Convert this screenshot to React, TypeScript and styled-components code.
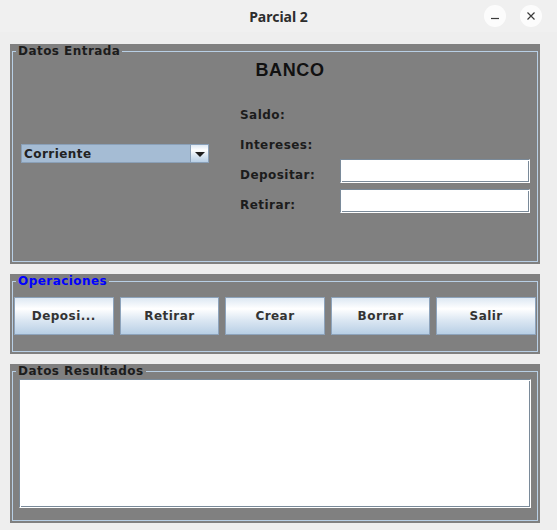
import React from 'react';
import styled, { createGlobalStyle } from 'styled-components';

const Global = createGlobalStyle`
  html, body { margin: 0; padding: 0; background: #eeeeee; }
  body { font-family: "DejaVu Sans", "Liberation Sans", sans-serif; }
  * { box-sizing: border-box; }
`;

const Window = styled.div`
  width: 557px;
  height: 530px;
  background: #eeeeee;
  display: flex;
  flex-direction: column;
  overflow: hidden;
`;

const TitleBar = styled.div`
  flex: none;
  height: 32px;
  background: #f0f0f0;
  display: grid;
  grid-template-columns: 1fr auto 1fr;
  align-items: center;
`;

const Title = styled.div`
  grid-column: 2;
  font-family: "Noto Sans", "DejaVu Sans", sans-serif;
  font-weight: 700;
  font-size: 14px;
  color: #2d2d2d;
`;

const Controls = styled.div`
  grid-column: 3;
  justify-self: end;
  display: flex;
  gap: 14px;
  padding-right: 15px;
`;

const CircleButton = styled.button`
  width: 22px;
  height: 22px;
  border-radius: 50%;
  border: none;
  padding: 0;
  background: #fcfcfc;
  display: grid;
  place-items: center;
  color: #3a3a3a;
`;

const Content = styled.div`
  flex: 1;
  display: flex;
  flex-direction: column;
  gap: 10px;
  padding: 12px 17px 7px 10px;
`;

const Panel = styled.div<{ $h: number }>`
  flex: none;
  height: ${(p) => p.$h}px;
  background: #808080;
  padding: 0 2px 2px 2px;
  display: flex;
`;

const Frame = styled.fieldset`
  flex: 1;
  margin: 0;
  padding: 0;
  min-width: 0;
  border: 1px solid #b8cfe5;
  display: flex;
  flex-direction: column;
`;

const Legend = styled.legend<{ $color?: string }>`
  margin-left: 3px;
  padding: 0 2px 0 2px;
  font-family: "DejaVu Sans", sans-serif;
  font-weight: 700;
  font-size: 12px;
  line-height: 14px;
  letter-spacing: 0.45px;
  color: ${(p) => p.$color ?? '#1c1c1c'};
`;

const Heading = styled.div`
  margin-top: 2px;
  padding-left: 30px;
  text-align: center;
  font-family: "Liberation Sans", Arial, sans-serif;
  font-weight: 700;
  font-size: 18px;
  line-height: 20px;
  letter-spacing: 0.6px;
  color: #111111;
`;

const EntryBody = styled.div`
  display: flex;
  margin-top: 19px;
  padding-left: 8px;
  gap: 31px;
`;

const Side = styled.div`
  padding-top: 45px;
`;

const Combo = styled.div`
  width: 188px;
  height: 19px;
  display: flex;
  border: 1px solid #8aa0b8;
`;

const ComboValue = styled.div`
  flex: 1;
  background: #a5bcd4;
  padding-left: 2px;
  display: flex;
  align-items: center;
  font-weight: 700;
  font-size: 12px;
  letter-spacing: 0.45px;
  color: #222222;
`;

const ComboArrow = styled.div`
  width: 18px;
  border-left: 1px solid #8aa0b8;
  background: linear-gradient(#dde8f3 0%, #ffffff 30%, #dde8f3 60%, #b8cfe5 100%);
  display: grid;
  place-items: center;
  &::after {
    content: '';
    width: 0;
    height: 0;
    border-left: 5px solid transparent;
    border-right: 5px solid transparent;
    border-top: 5px solid #1e1e1e;
    margin-top: 1px;
  }
`;

const Form = styled.div`
  display: grid;
  grid-template-columns: 100px 190px;
  grid-auto-rows: 30px;
`;

const Label = styled.span`
  grid-column: 1;
  align-self: center;
  padding-top: 2px;
  font-weight: 700;
  font-size: 12px;
  letter-spacing: 0.45px;
  color: #1c1c1c;
`;

const Field = styled.input`
  grid-column: 2;
  align-self: start;
  width: 190px;
  height: 24px;
  margin: 0;
  padding: 0 3px;
  background: #ffffff;
  border: 1px solid;
  border-color: #7a8a99 #ffffff #ffffff #7a8a99;
  box-shadow: inset 1px 1px 0 #ffffff, inset -1px -1px 0 #7a8a99;
  outline: none;
  font-family: "DejaVu Sans", sans-serif;
  font-size: 12px;
`;

const ButtonRow = styled.div`
  display: flex;
  gap: 6px;
  margin-top: 9px;
  padding: 0 1px;
`;

const ActionButton = styled.button`
  flex: 1;
  height: 38px;
  padding: 0;
  border: 1px solid #8da3bb;
  background: linear-gradient(#dde8f3 0%, #ffffff 30%, #dde8f3 60%, #b8cfe5 100%);
  font-family: "DejaVu Sans", sans-serif;
  font-weight: 700;
  font-size: 12px;
  letter-spacing: 0.45px;
  color: #333333;
`;

const Output = styled.textarea`
  height: 129px;
  margin: 1px 6px 0 6px;
  padding: 2px;
  resize: none;
  background: #ffffff;
  border: 1px solid;
  border-color: #7a8a99 #ffffff #ffffff #7a8a99;
  box-shadow: inset 1px 1px 0 #ffffff, inset -1px -1px 0 #7a8a99;
  outline: none;
  font-family: "DejaVu Sans", sans-serif;
  font-size: 12px;
`;

const fields = [
  { label: 'Saldo:', input: false },
  { label: 'Intereses:', input: false },
  { label: 'Depositar:', input: true },
  { label: 'Retirar:', input: true },
];

const actions = ['Deposi...', 'Retirar', 'Crear', 'Borrar', 'Salir'];

export default function App() {
  return (
    <>
      <Global />
      <Window>
        <TitleBar>
          <Title>Parcial 2</Title>
          <Controls>
            <CircleButton aria-label="Minimizar">
              <svg width="10" height="10" viewBox="0 0 10 10">
                <line x1="1" y1="7.5" x2="9" y2="7.5" stroke="currentColor" strokeWidth="1.2" />
              </svg>
            </CircleButton>
            <CircleButton aria-label="Cerrar">
              <svg width="10" height="10" viewBox="0 0 10 10">
                <path d="M1.5 1.5 L8.5 8.5 M8.5 1.5 L1.5 8.5" stroke="currentColor" strokeWidth="1.2" />
              </svg>
            </CircleButton>
          </Controls>
        </TitleBar>
        <Content>
          <Panel $h={220}>
            <Frame>
              <Legend>Datos Entrada</Legend>
              <Heading>BANCO</Heading>
              <EntryBody>
                <Side>
                  <Combo>
                    <ComboValue>Corriente</ComboValue>
                    <ComboArrow />
                  </Combo>
                </Side>
                <Form>
                  {fields.map((f) => (
                    <React.Fragment key={f.label}>
                      <Label>{f.label}</Label>
                      {f.input && <Field type="text" />}
                    </React.Fragment>
                  ))}
                </Form>
              </EntryBody>
            </Frame>
          </Panel>
          <Panel $h={80}>
            <Frame>
              <Legend $color="#0000ff">Operaciones</Legend>
              <ButtonRow>
                {actions.map((a) => (
                  <ActionButton key={a}>{a}</ActionButton>
                ))}
              </ButtonRow>
            </Frame>
          </Panel>
          <Panel $h={159}>
            <Frame>
              <Legend>Datos Resultados</Legend>
              <Output readOnly />
            </Frame>
          </Panel>
        </Content>
      </Window>
    </>
  );
}
